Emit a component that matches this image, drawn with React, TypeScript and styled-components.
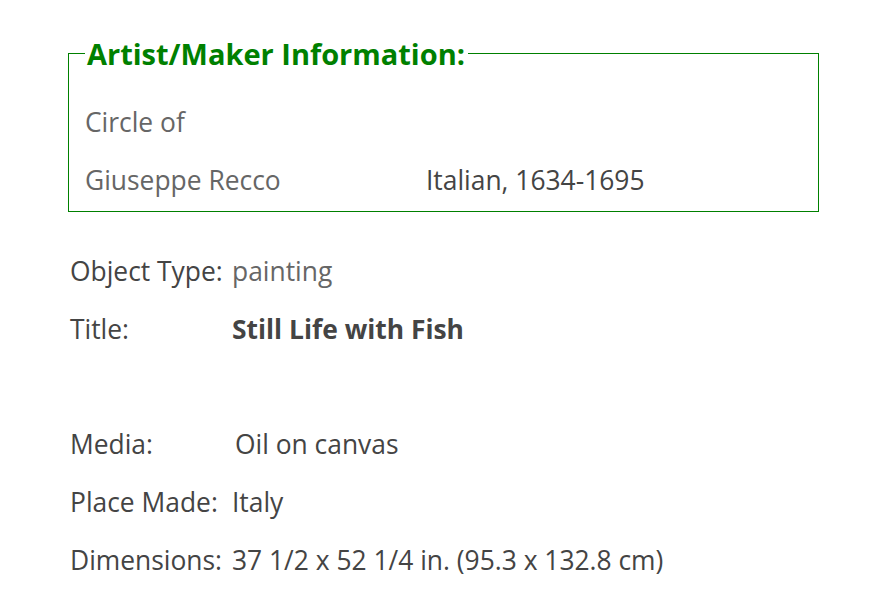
import * as React from 'react'
import styled, { createGlobalStyle } from 'styled-components'

const GlobalStyle = createGlobalStyle`
  body {
    margin: 0;
    background: #fff;
    font-family: "Open Sans", "Liberation Sans", sans-serif;
  }
`

const Page = styled.div`
  padding: 36px 0 0 68px;
  width: 751px;
`
const MakerBox = styled.fieldset`
  margin: 0;
  padding: 23px 16px 2px 16px;
  border: 1px solid #008000;
  width: 751px;
  box-sizing: border-box;
`
const Legend = styled.legend`
  padding: 1px 3px 0 2px;
  margin-left: 0;
  font-size: 29px;
  font-weight: 700;
  color: #008000;
  line-height: 33px;
`
const MakerGrid = styled.div`
  display: grid;
  grid-template-columns: 341px 1fr;
`
const MakerCell = styled.div<{ $dark?: boolean }>`
  font-size: 26.4px;
  line-height: 58px;
  min-height: 58px;
  color: ${props => (props.$dark ? '#444' : '#666')};
`
const Details = styled.div`
  display: grid;
  grid-template-columns: 162px 1fr;
  margin-top: 30px;
  margin-left: 2px;
`
const Label = styled.div`
  font-size: 26.4px;
  line-height: 58px;
  color: #444;
`
const Value = styled.div<{ $muted?: boolean, $bold?: boolean, $indent?: number }>`
  font-size: 26.4px;
  line-height: 58px;
  color: ${props => (props.$muted ? '#666' : '#444')};
  font-weight: ${props => (props.$bold ? 700 : 400)};
  padding-left: ${props => props.$indent || 0}px;
`
const Spacer = styled.div`
  grid-column: 1 / span 2;
  height: 57px;
`

const ROWS = [
  { label: 'Object Type:', value: 'painting', muted: true },
  { label: 'Title:', value: 'Still Life with Fish', bold: true },
  null,
  { label: 'Media:', value: 'Oil on canvas', indent: 3 },
  { label: 'Place Made:', value: 'Italy' },
  { label: 'Dimensions:', value: '37 1/2 x 52 1/4 in. (95.3 x 132.8 cm)' },
]

export default function App() {
  return (
    <Page>
      <GlobalStyle />
      <MakerBox>
        <Legend>Artist/Maker Information:</Legend>
        <MakerGrid>
          <MakerCell>Circle of</MakerCell>
          <MakerCell />
          <MakerCell>Giuseppe Recco</MakerCell>
          <MakerCell $dark>Italian, 1634-1695</MakerCell>
        </MakerGrid>
      </MakerBox>
      <Details>
        {ROWS.map((row, i) => (row ? (
          <React.Fragment key={i}>
            <Label>{row.label}</Label>
            <Value $muted={row.muted} $bold={row.bold} $indent={row.indent}>{row.value}</Value>
          </React.Fragment>
        ) : <Spacer key={i} />))}
      </Details>
    </Page>
  )
}
